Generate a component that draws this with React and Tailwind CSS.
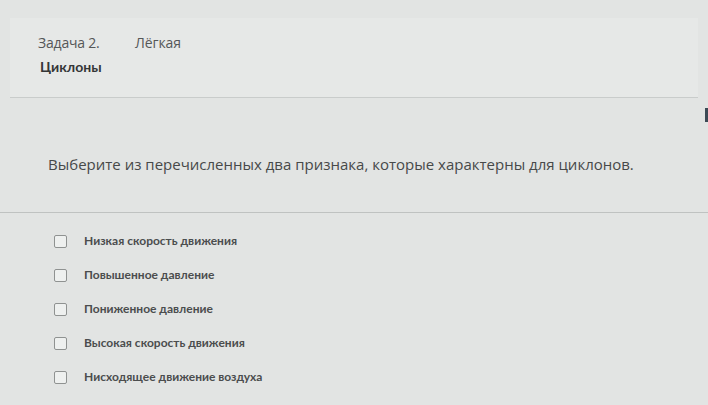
import React from 'react'

const options = [
  'Низкая скорость движения',
  'Повышенное давление',
  'Пониженное давление',
  'Высокая скорость движения',
  'Нисходящее движение воздуха',
]

const App = () => {
  return (
    <div className="w-[708px] h-[405px] overflow-hidden bg-[#e2e4e3] relative" style={{ fontFamily: '"Open Sans", sans-serif' }}>
      {/* header card */}
      <div className="mx-[10px] mt-[18px] h-[80px] bg-[#e6e8e7] border-b border-[#c9cccb] pl-[28px] pt-[14px]">
        <div className="flex items-baseline text-[14px] text-[#555758]">
          <span className="w-[97px] tracking-[-0.2px]">Задача 2.</span>
          <span className="-mt-[6px] tracking-[-0.1px]">Лёгкая</span>
        </div>
        <div className="mt-[3px] ml-[2px] text-[14px] font-bold text-[#343637]" style={{ fontFamily: 'Lato, sans-serif' }}>
          Циклоны
        </div>
      </div>

      {/* question */}
      <div className="pl-[48px] pt-[55px] h-[115px] border-b border-[#bfc2c1]">
        <p className="text-[15px] text-[#474949]">
          Выберите из перечисленных два признака, которые характерны для циклонов.
        </p>
      </div>

      {/* options */}
      <div className="flex flex-col gap-[16px] pl-[54px] pt-[19px]">
        {options.map((o, i) => (
          <label key={i} className="flex items-center gap-[17px]">
            <span className="w-[13px] h-[13px] border border-[#8f9291] rounded-[2px] bg-[#eef0ef]" />
            <span className="text-[12px] font-bold text-[#4b4d4e]" style={{ fontFamily: 'Lato, sans-serif' }}>{o}</span>
          </label>
        ))}
      </div>

      <div className="absolute right-0 top-[108px] w-[3px] h-[14px] bg-[#3c4a55]" />
    </div>
  )
}

export default App
